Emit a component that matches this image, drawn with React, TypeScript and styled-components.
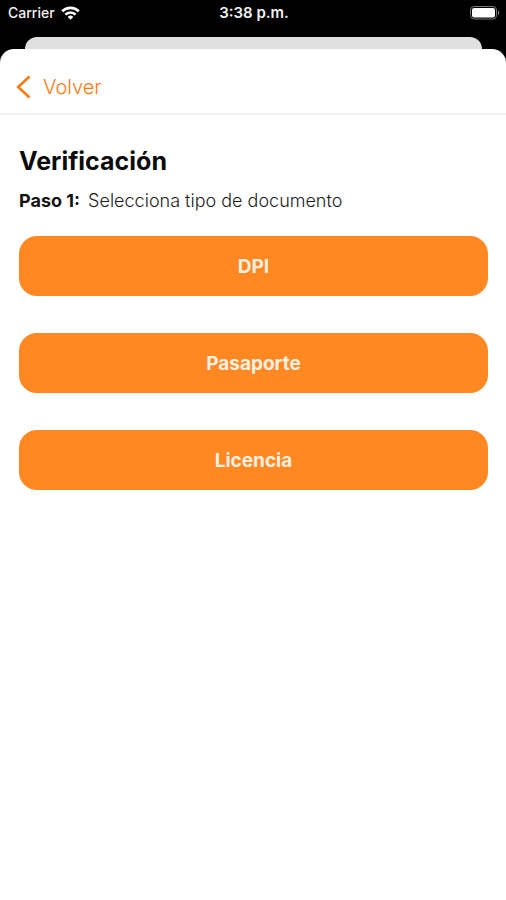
import React from "react";
import styled, { createGlobalStyle } from "styled-components";

const GlobalStyle = createGlobalStyle`
  * {
    box-sizing: border-box;
  }
  body {
    margin: 0;
    background: #000;
    font-family: Inter, "Liberation Sans", sans-serif;
  }
`;

const Screen = styled.div`
  display: flex;
  flex-direction: column;
  min-height: 100vh;
  background: #000;
`;

const StatusBar = styled.div`
  display: grid;
  grid-template-columns: 1fr auto 1fr;
  align-items: center;
  height: 37px;
  padding: 0 6px 11px 8px;
  color: #f2f2f2;
  font-size: 15px;
  line-height: 20px;
`;

const Carrier = styled.div`
  display: flex;
  align-items: center;
  gap: 6px;
  font-size: 14px;
  font-weight: 500;
`;

const Clock = styled.time`
  font-weight: 600;
`;

const BatteryIcon = styled.svg`
  justify-self: end;
`;

const SheetBehind = styled.div`
  height: 12px;
  margin: 0 24px 0 25px;
  border-radius: 12px 12px 0 0;
  background: #e0e0e0;
`;

const Sheet = styled.div`
  flex: 1;
  border-radius: 14px 14px 0 0;
  background: #fff;
`;

const NavBar = styled.header`
  display: flex;
  align-items: center;
  height: 66px;
  padding: 12px 16px 0;
  border-bottom: 2px solid #efefef;
`;

const BackButton = styled.button`
  display: flex;
  align-items: center;
  gap: 12px;
  padding: 0;
  border: 0;
  background: none;
  color: #ff7a14;
  font: 300 20px/24px Inter, "Liberation Sans", sans-serif;
  cursor: pointer;
`;

const Content = styled.main`
  padding: 30px 18px 30px 19px;
`;

const Title = styled.h1`
  margin: 0;
  color: #0c0c0c;
  font-size: 25px;
  font-weight: 700;
  line-height: 32px;
`;

const Step = styled.p`
  margin: 12px 0 24px;
  color: #1c1c1c;
  font-size: 18px;
  font-weight: 300;
  line-height: 23px;
`;

const StepNumber = styled.strong`
  margin-right: 3px;
  color: #141414;
  font-weight: 700;
`;

const Options = styled.div`
  display: flex;
  flex-direction: column;
  gap: 37px;
`;

const OptionButton = styled.button`
  height: 60px;
  padding: 2px 16px 0;
  border: 0;
  border-radius: 18px;
  background: #ff8822;
  color: #fff0e2;
  font: 700 19px/24px Inter, "Liberation Sans", sans-serif;
  cursor: pointer;
`;

const documentTypes = ["DPI", "Pasaporte", "Licencia"];

export default function App() {
  return (
    <>
      <GlobalStyle />
      <Screen>
        <StatusBar>
          <Carrier>
            <span>Carrier</span>
            <svg width="19" height="14" viewBox="0 0 19 14" aria-hidden="true">
              <g fill="none" stroke="#fff" strokeWidth="2.7">
                <path d="M1.2 5.3a11.7 11.7 0 0 1 16.6 0" />
                <path d="M4.4 8.6a7.2 7.2 0 0 1 10.2 0" />
              </g>
              <path d="M9.5 13.7 6.7 10.9a4 4 0 0 1 5.6 0z" fill="#fff" />
            </svg>
          </Carrier>
          <Clock>3:38 p.m.</Clock>
          <BatteryIcon width="30" height="14" viewBox="0 0 30 14" aria-hidden="true">
            <rect x="0.5" y="0.5" width="26" height="12.5" rx="3.5" fill="none" stroke="#777" />
            <rect x="2" y="2" width="23" height="9.5" rx="2" fill="#fff" />
            <path d="M28 4.5c1.6.5 1.6 4 0 4.5z" fill="#888" />
          </BatteryIcon>
        </StatusBar>
        <SheetBehind />
        <Sheet>
          <NavBar>
            <BackButton type="button">
              <svg width="15" height="24" viewBox="0 0 15 24" aria-hidden="true">
                <path d="M13.5 1.5 2.2 12l11.3 10.5" fill="none" stroke="#f57c14" strokeWidth="2.6" />
              </svg>
              Volver
            </BackButton>
          </NavBar>
          <Content>
            <Title>Verificación</Title>
            <Step>
              <StepNumber>Paso 1:</StepNumber> Selecciona tipo de documento
            </Step>
            <Options>
              {documentTypes.map((name) => (
                <OptionButton key={name} type="button">
                  {name}
                </OptionButton>
              ))}
            </Options>
          </Content>
        </Sheet>
      </Screen>
    </>
  );
}
